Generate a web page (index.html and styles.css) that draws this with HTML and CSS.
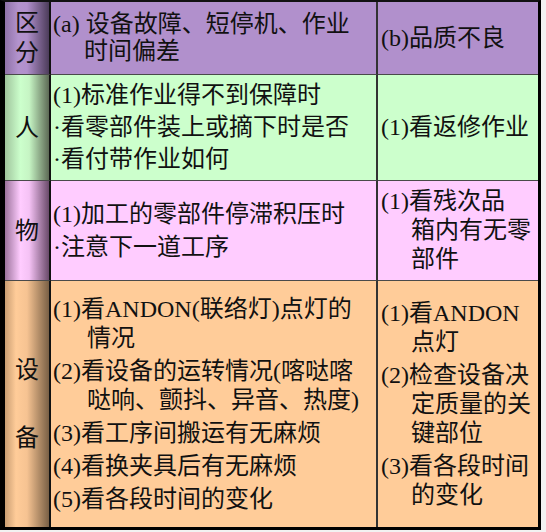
FILE: index.html
```html
<!DOCTYPE html>
<html lang="zh-CN">
<head>
<meta charset="utf-8">
<title>区分</title>
<link rel="stylesheet" href="styles.css">
</head>
<body>
<div class="table">
  <div class="cell head side side-head"><div class="stack">区<br>分</div></div>
  <div class="cell head mid"><p class="hang hang-a">(a) 设备故障、短停机、作业<br>时间偏差</p></div>
  <div class="cell head last"><p>(b)品质不良</p></div>

  <div class="cell green side side-green"><div class="stack">人</div></div>
  <div class="cell green mid">
    <div class="block">
      <p class="para">(1)标准作业得不到保障时</p>
      <p class="para">·看零部件装上或摘下时是否</p>
      <p class="para">·看付带作业如何</p>
    </div>
  </div>
  <div class="cell green last"><p class="para">(1)看返修作业</p></div>

  <div class="cell pink side side-pink"><div class="stack">物</div></div>
  <div class="cell pink mid">
    <div class="block">
      <p class="para">(1)加工的零部件停滞积压时</p>
      <p class="para">·注意下一道工序</p>
    </div>
  </div>
  <div class="cell pink last"><p class="para hang hang-r">(1)看残次品<br>箱内有无零<br>部件</p></div>

  <div class="cell orange side side-orange bottom"><div class="stack tall">设<br><br>备</div></div>
  <div class="cell orange mid bottom">
    <div class="block">
      <p class="para hang hang-m">(1)看ANDON(联络灯)点灯的<br>情况</p>
      <p class="para hang hang-m">(2)看设备的运转情况(喀哒喀<br>哒响、颤抖、异音、热度)</p>
      <p class="para">(3)看工序间搬运有无麻烦</p>
      <p class="para">(4)看换夹具后有无麻烦</p>
      <p class="para">(5)看各段时间的变化</p>
    </div>
  </div>
  <div class="cell orange last bottom">
    <div class="block">
      <p class="para hang hang-r">(1)看ANDON<br>点灯</p>
      <p class="para hang hang-r">(2)检查设备决<br>定质量的关<br>键部位</p>
      <p class="para hang hang-r">(3)看各段时间<br>的变化</p>
    </div>
  </div>
</div>
</body>
</html>
```

FILE: styles.css
```css
html, body {
  margin: 0;
  padding: 0;
  background: #f2f2f2;
}

.table {
  box-sizing: border-box;
  width: 541px;
  height: 530px;
  border-left: 5px solid #000;
  border-top: 2px solid #111;
  border-right: 3px solid #000;
  border-bottom: 3px solid #000;
  display: grid;
  grid-template-columns: 46px 327px 160px;
  grid-template-rows: 73px 106px 100px 246px;
  font-family: "Liberation Serif", "Noto Sans CJK SC", serif;
  font-size: 24px;
  color: #111;
}

.cell {
  box-sizing: border-box;
  display: flex;
  align-items: center;
  border-bottom: 1px solid #4a4a4a;
  white-space: nowrap;
  overflow: hidden;
}
.cell.bottom { border-bottom: none; }

.side {
  border-right: 2px solid #111;
  justify-content: center;
}
.mid {
  border-right: 2px solid #333;
  padding-left: 2px;
}
.last {
  padding-left: 3px;
}

p { margin: 0; }

.stack {
  text-align: center;
  line-height: 30px;
}
.stack.tall { line-height: 34px; }

.head p { line-height: 27px; }
.para { line-height: 29px; }
.block .para + .para { margin-top: 4px; }
.green .block .para + .para { margin-top: 3px; }

.hang { text-indent: -32px; padding-left: 32px; }
.hang-a { text-indent: -31px; padding-left: 31px; }
.hang-m { text-indent: -34px; padding-left: 34px; }
.hang-r { text-indent: -30px; padding-left: 30px; }

.head { background: #b190cc; }
.green { background: #ccffcc; }
.pink { background: #ffccff; }
.orange { background: #ffcc99; }

.side-head {
  background: linear-gradient(to right, #8f72a8 0%, #b393cd 30%, #b190cc 50%, #4c3c5a 100%);
}
.side-green {
  background: linear-gradient(to right, #9fc49c 0%, #ccffcc 35%, #c6f5c4 55%, #5d6a55 100%);
}
.side-pink {
  background: linear-gradient(to right, #9c739c 0%, #ffccff 35%, #f5c2f5 55%, #6a4a6a 100%);
}
.side-orange {
  background: linear-gradient(to right, #c99d72 0%, #ffcc99 25%, #f6c392 50%, #7a6045 100%);
}
```
